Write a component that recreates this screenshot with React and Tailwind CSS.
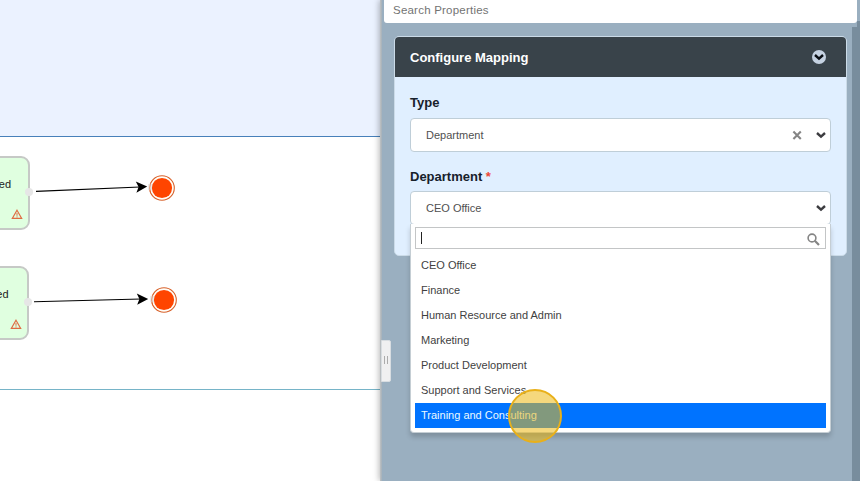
import React from "react";

const OPTIONS = [
  "CEO Office",
  "Finance",
  "Human Resource and Admin",
  "Marketing",
  "Product Development",
  "Support and Services",
  "Training and Consulting",
];

function Chevron({ className }) {
  return (
    <svg className={className} width="10" height="8" viewBox="0 0 10 8" fill="none" stroke="currentColor" strokeWidth="2.4">
      <path d="M1 2 L5 5.6 L9 2" />
    </svg>
  );
}

function Clear() {
  return (
    <svg className="text-[#858585]" width="10" height="10" viewBox="0 0 10 10" fill="none" stroke="currentColor" strokeWidth="2.1">
      <path d="M1.4 1.6 L8.8 9 M8.8 1.6 L1.4 9" />
    </svg>
  );
}

function Magnifier() {
  return (
    <svg className="text-[#858585]" width="13" height="13" viewBox="0 0 13 13" fill="none" stroke="currentColor">
      <circle cx="5" cy="5" r="3.9" strokeWidth="1.6" />
      <path d="M7.8 7.8 L12 12" strokeWidth="2.2" />
    </svg>
  );
}

function TaskNode({ className, label }) {
  return (
    <div className={`absolute left-[-70px] h-[74px] rounded-[9px] border-2 border-[#c6c9c6] bg-[#e0ffe0] ${className}`}>
      <span className={`absolute top-[19px] text-[11px] leading-[14px] text-[#222] ${label}`}>Approved</span>
      <svg className="absolute bottom-[8px] right-[5px]" width="12" height="11" viewBox="0 0 12 11" fill="none" stroke="#df6c42">
        <path d="M6 1.2 L10.7 9.4 H1.3 Z" strokeWidth="1.15" />
        <path d="M6 4 V6.8 M6 7.4 V8.5" strokeWidth="1" />
      </svg>
      <div className="absolute right-[-5px] top-[30px] h-2 w-2 rounded-full bg-[#e6e6e6]" />
    </div>
  );
}

function EndNode({ className }) {
  return (
    <svg className={`absolute ${className}`} width="28" height="28" viewBox="0 0 28 28">
      <circle cx="14" cy="14" r="12.3" fill="#fffef8" stroke="#d8622c" strokeWidth="1.1" />
      <circle cx="2.2" cy="13" r="3.4" fill="#e6e6e6" fillOpacity="0.85" />
      <path d="M5 5.6 A12.3 12.3 0 0 0 5 22.4" fill="none" stroke="#d8622c" strokeOpacity="0.6" />
      <circle cx="14" cy="14" r="10.1" fill="#ff4500" />
    </svg>
  );
}

function Canvas() {
  return (
    <div className="relative flex h-full w-[380px] shrink-0 flex-col overflow-hidden bg-white">
      <div className="h-[137px] shrink-0 border-b border-[#4780ba] bg-[#ebf2ff]" />
      <div className="h-[253px] shrink-0 border-b border-[#76b4c8]" />
      <TaskNode className="top-[156px] w-[100px]" label="right-[17px]" />
      <TaskNode className="top-[266px] w-[99px]" label="right-[18.5px]" />
      <EndNode className="left-[148px] top-[174px]" />
      <EndNode className="left-[150px] top-[286px]" />
      <svg className="absolute left-0 top-0" width="380" height="481" viewBox="0 0 380 481" stroke="#000">
        <path d="M36 191.4 L140 187" strokeWidth="1.1" />
        <path d="M34 301.7 L141 299" strokeWidth="1.1" />
        <path d="M135.8 181.4 L147.2 186.6 L136.4 192.8 L138.6 187 Z" stroke="none" />
        <path d="M136.8 293.5 L148.2 299 L137.2 304.7 L139.4 299 Z" stroke="none" />
      </svg>
    </div>
  );
}

function Dropdown() {
  return (
    <div className="absolute left-[-1px] right-[-1px] top-[32px] z-10 rounded-b-[4px] border border-t-0 border-[#c5ced4] bg-white px-1 pb-1 pt-[3px] shadow-[0_4px_5px_rgba(0,0,0,0.18)]">
      <div className="flex h-[22px] items-center border border-[#c3c5c6] pl-[5px] pr-[5px]">
        <span className="h-3 w-px bg-[#222]" />
        <span className="ml-auto mt-[2px]"><Magnifier /></span>
      </div>
      <ul className="mt-1">
        {OPTIONS.map((name, i) => (
          <li
            key={name}
            className={`flex h-[25px] items-center px-1.5 pb-[2px] ${i === 6 ? "bg-[#0073ff] text-[#eafaff]" : "text-[#3f3f3f]"}`}
          >
            {name}
          </li>
        ))}
      </ul>
      <div className="absolute left-[97px] top-[165px] h-[54px] w-[54px] rounded-full border-2 border-[#e9b019] bg-[#edb813]/55" />
    </div>
  );
}

function Select({ value, clearable, children }) {
  return (
    <div className="relative flex h-[34px] items-center rounded-[4px] border border-[#bfced8] bg-white pl-[15px] pr-[4px] text-[#505050]">
      <span>{value}</span>
      <span className="ml-auto flex items-center gap-[14px]">
        {clearable && <Clear />}
        <Chevron className="text-[#3c3c40]" />
      </span>
      {children}
    </div>
  );
}

function Panel() {
  return (
    <aside className="relative flex h-full flex-1 bg-[#9aafc0] shadow-[-1px_0_6px_rgba(0,0,0,0.28)]">
      <div className="w-[2px] shrink-0 bg-gradient-to-r from-[#c0c2c3] to-[#a4b0b9]" />
      <div className="flex flex-1 flex-col">
        <div className="ml-[2px] mr-[3px] flex h-[23px] shrink-0 items-start rounded-b-[3px] bg-white pl-[9px] pt-[3px] text-[11.5px] leading-[14px] tracking-[0.22px] text-[#737373]">
          Search Properties
        </div>
        <div className="ml-[12px] mr-[13px] mt-[13px] h-[220px] rounded-[5px] border border-[#cbdbe8] bg-[#e0efff]">
          <header className="flex h-10 items-center justify-between rounded-t-[4px] bg-[#39434a] pl-[15px] pr-[20px] text-[13px] font-bold text-white">
            <span className="pt-px">Configure Mapping</span>
            <span className="flex h-[14px] w-[14px] items-center justify-center rounded-full bg-[#c5d2e2]">
              <Chevron className="text-[#080d13]" />
            </span>
          </header>
          <div className="px-[15px] text-[11px] leading-[14px]">
            <div className="pb-[7px] pt-[18px] text-[13px] font-bold leading-4 text-[#17212b]">Type</div>
            <Select value="Department" clearable />
            <div className="pb-[6px] pt-[17px] text-[13px] font-bold leading-4 text-[#17212b]">
              Department <span className="text-[#ed4635]">*</span>
            </div>
            <Select value="CEO Office">
              <Dropdown />
            </Select>
          </div>
        </div>
      </div>
      <div className="absolute bottom-0 right-0 top-[27px] w-2 bg-[#788d9d]" />
      <div className="absolute right-0 top-[21px] h-[6px] w-[3px] bg-[#788d9d]" />
      <div className="absolute left-[1px] top-[340px] flex h-[42px] w-[10px] items-center justify-center gap-[2px] rounded-r-[2px] border border-[#d8dde1] bg-[#f0f0f1] pb-[2px]">
        <span className="h-2 w-px bg-[#acacac]" />
        <span className="h-2 w-px bg-[#acacac]" />
      </div>
    </aside>
  );
}

export default function App() {
  return (
    <div className="flex h-[481px] w-[860px] overflow-hidden bg-white font-['Liberation_Sans',Arial,sans-serif]">
      <Canvas />
      <Panel />
    </div>
  );
}
